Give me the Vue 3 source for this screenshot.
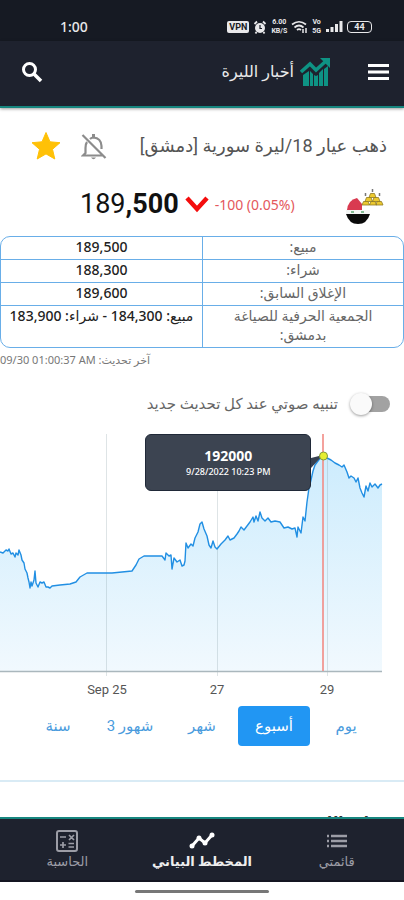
<script setup>
import { ref } from 'vue'

const rows = [
  { label: 'مبيع:', value: '189,500' },
  { label: 'شراء:', value: '188,300' },
  { label: 'الإغلاق السابق:', value: '189,600' },
  { label: 'الجمعية الحرفية للصياغة بدمشق:', value: 'مبيع: 184,300 - شراء: 183,900' },
]
const ranges = ['يوم', 'أسبوع', 'شهر', 'شهور 3', 'سنة']
const active = ref('أسبوع')
const sound = ref(false)

const line =
  'M0 118L3 119L6 116L8 117L9 115L11 120L13 119L15 123L16 119L18 121L19 116L21 121L22 126L24 129L25 135L27 139L28 144L29 148L30 154L31 148L32 152L34 146L35 137L36 149L38 153L40 148L42 149L44 148L46 153L48 153L50 154L52 152L60 151L70 150L76 148L80 143L87 139H112L132 137L136 131L139 125L144 122H162L165 126L166 119L169 122L171 121L172 135L174 124L177 128L180 126L182 132L184 131L185 127L186 109L188 114L191 110L193 112L195 104L198 98L200 90L202 88L204 95L207 102L209 111L211 114L213 107L215 113L217 115L221 110L225 106L228 102L230 106L234 104L237 100L239 97L241 93L244 96L247 92L250 88L253 83L254 88L256 82L258 87L260 78L262 84L265 87L268 84L271 88L275 87L280 88L284 94L288 93L292 95L295 94L297 103L298 93L301 99L303 83L305 87L307 68L309 54L311 46L313 37L315 31L318 27L321 23L323 22L327 24L331 26L335 29L339 31L342 33L344 31L347 38L349 44L351 42L354 44L356 48L358 44L360 54L362 59L364 63L366 52L368 57L370 49L372 53L375 50L378 54L380 51L382 50'
</script>

<template>
  <div class="app">
    <div class="status">
      <span class="clock">1:00</span>
      <div class="indicators">
        <span class="vpn">VPN</span>
        <svg width="14" height="14" viewBox="0 0 14 14"><circle cx="7" cy="8" r="5" fill="#e8e8ea" /><path d="M1.500 4L4 1.500M12.500 4L10 1.500M3.500 12L2.500 13.500M10.500 12L11.500 13.500" stroke="#e8e8ea" stroke-width="1.800" /><path d="M7 5V8.500H9" fill="none" stroke="#171a23" stroke-width="1.200" /></svg>
        <span class="speed"><span>6.00</span><span>KB/S</span></span>
        <svg width="17" height="14" viewBox="0 0 17 14" fill="none" stroke="#e8e8ea" stroke-width="1.700"><path d="M1 4.500Q8 -1 15 4.500M3.500 7.500Q8 3.500 12.500 7.500M6 10Q8 8.300 10 10" /><path d="M12 9V13M15 8V13" stroke-width="1.500" /></svg>
        <span class="speed"><span>Vo</span><span>5G</span></span>
        <svg width="18" height="13" viewBox="0 0 18 13" fill="#e8e8ea"><path d="M1 9h3v3H1zM5.500 7h3v5h-3zM10 4h3v8h-3zM14.500 1h3v11h-3z" /></svg>
        <span class="battery">44</span>
      </div>
    </div>

    <header class="header">
      <button class="icon-btn" aria-label="بحث">
        <svg width="24" height="24" viewBox="0 0 24 24" fill="none" stroke="#fff" stroke-width="3"><circle cx="9.500" cy="9.500" r="6" /><path d="M14 14L21 21" stroke-width="3.500" /></svg>
      </button>
      <div class="brand">
        <span dir="rtl">أخبار الليرة</span>
        <svg width="31" height="30" viewBox="0 0 31 30"><path d="M3 18L9 14V29H3zM10 14L13 17V29H10zM14 18L16 19L18 18V29H14zM19 16L23 12V29H19zM24 12L28 9V29H24z" fill="#0e9384" /><path d="M1 15L10 7L16 13L26 4" fill="none" stroke="#0e9384" stroke-width="3.500" /><path d="M20 1H30V11z" fill="#0e9384" /></svg>
      </div>
      <button class="icon-btn" aria-label="القائمة">
        <svg width="24" height="24" viewBox="0 0 24 24" fill="#fff"><path d="M2 4h21v3H2zM2 10.500h21v3H2zM2 17h21v3H2z" /></svg>
      </button>
    </header>

    <main class="main">
      <div class="title-row">
        <button class="icon-btn" aria-label="المفضلة">
          <svg width="30" height="30" viewBox="0 0 30 30"><path d="M15 1.500L19 10.800L29 11.700L21.500 18.300L23.800 28L15 22.900L6.200 28L8.500 18.300L1 11.700L11 10.800z" fill="#ffc107" stroke="#ffc107" stroke-linejoin="round" /></svg>
        </button>
        <button class="icon-btn" aria-label="إيقاف التنبيه">
          <svg width="26" height="28" viewBox="0 0 26 28" fill="none" stroke="#8c8c8c" stroke-width="2.200"><path d="M6 10Q4.500 12 4.500 16V21L2 23.500H22M9 7Q10.500 5.500 12.500 5.500Q20 6 20.500 14V17M1.500 3L24.500 26" /><path d="M12.500 2V5" stroke-width="3" /><path d="M10 25.500H15Q12.500 29 10 25.500z" fill="#8c8c8c" stroke="none" /></svg>
        </button>
        <h1 dir="rtl">ذهب عيار 18/ليرة سورية [دمشق]</h1>
      </div>

      <div class="price-row">
        <span class="price">189<b>,500</b></span>
        <svg class="arrow" width="26" height="20" viewBox="0 0 26 20"><path d="M3 4L13 15L23 4" fill="none" stroke="#f40d0d" stroke-width="4.500" /></svg>
        <span class="change">-100 (0.05%)</span>
        <svg class="flag" width="41" height="40" viewBox="0 0 41 40">
          <path d="M4 26Q5 16 14 14L19 20V26z" fill="#d93a50" />
          <path d="M3 26H27V30H3z" fill="#f4f6f5" />
          <path d="M8 28h3M18 28h3" stroke="#5ea873" stroke-width="1.500" />
          <path d="M3 30H27Q24 40 15 40Q6 40 3 30z" fill="#0a0a0a" />
          <g fill="#ecc92f" stroke="#907a22" stroke-width=".8">
            <path d="M19 21L20.500 17.500H25L26.500 21zM26.500 21L28 17.500H32L33.500 21zM33 21L34 17.500H38.500L40 21z" />
            <path d="M22 17.500L23.500 13.500H28L29.500 17.500zM29.500 17.500L31 13.500H35.500L37 17.500z" />
            <path d="M26 13.500L27.500 9.500H31.500L33 13.500z" />
          </g>
          <path d="M22.500 9V12M29.500 5V8M36.500 9V12" stroke="#777" stroke-width="1.500" />
        </svg>
      </div>

      <table class="quotes" dir="rtl">
        <tbody>
          <tr v-for="row in rows" :key="row.label">
            <th scope="row">{{ row.label }}</th>
            <td>{{ row.value }}</td>
          </tr>
        </tbody>
      </table>
      <p class="updated"><bdi>09/30 01:00:37 AM</bdi> <bdi>آخر تحديث:</bdi></p>

      <label class="sound" dir="rtl">
        <input v-model="sound" type="checkbox" role="switch" />
        <span>تنبيه صوتي عند كل تحديث جديد</span>
      </label>

      <div class="chart">
        <svg viewBox="0 0 404 242" role="img" aria-label="المخطط البياني">
          <defs>
            <linearGradient id="area" x1="0" y1="0" x2="0" y2="1"><stop offset="0" stop-color="#cdecfd" /><stop offset="1" stop-color="#f1f9fe" /></linearGradient>
          </defs>
          <path :d="line + 'V237H0z'" fill="url(#area)" />
          <path d="M106.500 0V243M217.500 0V243M327.500 22V243" stroke="#7c929c" stroke-opacity=".25" />
          <path :d="line" fill="none" stroke="#218fe3" stroke-width="1.400" stroke-linejoin="round" />
          <path d="M0 237.500H382" stroke="#aab7bd" stroke-width="1.500" />
          <path d="M323 0V237" stroke="#f28b85" stroke-width="1.600" />
          <path d="M311 24L323 21L311 34z" fill="#374151" />
          <circle cx="323.500" cy="22" r="4" fill="#e6ee31" stroke="#829b3d" />
        </svg>
        <div class="tooltip"><strong>192000</strong><span>9/28/2022 10:23 PM</span></div>
        <div class="axis"><span>Sep 25</span><span>27</span><span>29</span></div>
      </div>

      <div class="ranges" dir="rtl">
        <button v-for="r in ranges" :key="r" :class="{ active: r === active }" @click="active = r">{{ r }}</button>
      </div>

      <section class="more" dir="rtl"><h2>قراءة الليرة</h2></section>
    </main>

    <nav class="tabs">
      <a href="#calculator">
        <svg width="24" height="24" viewBox="0 0 24 24" fill="none" stroke="#9c9da6" stroke-width="2"><rect x="2" y="2" width="20" height="20" rx="2" /><path d="M5 8H11M14 6L19 11M19 6L14 11M5 16H11M8 13V19M13.500 14.500H19M13.500 18H19" stroke-width="1.700" /></svg>
        <span>الحاسبة</span>
      </a>
      <a href="#chart" class="current">
        <svg width="26" height="24" viewBox="0 0 26 24"><path d="M3 17L10 9L16 14L23 6" fill="none" stroke="#fff" stroke-width="3" /><g fill="#fff"><circle cx="3" cy="17" r="2.500" /><circle cx="10" cy="9" r="2.500" /><circle cx="16" cy="14" r="2.500" /><circle cx="23" cy="6" r="2.500" /></g></svg>
        <span>المخطط البياني</span>
      </a>
      <a href="#list">
        <svg width="24" height="24" viewBox="0 0 24 24" stroke="#9c9da6" stroke-width="2.400"><path d="M2 7H4M6 7H22M2 12H4M6 12H22M2 17H4M6 17H22" /></svg>
        <span>قائمتي</span>
      </a>
    </nav>
    <div class="home"><i></i></div>
  </div>
</template>

<style>
body { margin: 0; }
</style>

<style scoped>
* { box-sizing: border-box; }
.app { height: 100vh; display: flex; flex-direction: column; overflow: hidden; background: #fff; font-family: Roboto, "DejaVu Sans", sans-serif; color: #555; }
button { font: inherit; border: 0; background: none; padding: 0; cursor: pointer; }
svg { display: block; flex: none; }
.status { height: 41px; flex: none; padding: 12px 32px 0 60px; display: flex; align-items: center; justify-content: space-between; background: #161a23; color: #e8e8ea; }
.clock { font: 500 14px "Noto Sans", sans-serif; }
.indicators { display: flex; align-items: center; gap: 4px; }
.vpn { width: 22px; height: 12px; border-radius: 2px; background: #e8e8ea; color: #161a23; font-size: 9px; font-weight: 700; line-height: 12px; text-align: center; }
.speed { display: grid; font-size: 7px; font-weight: 700; line-height: 9px; text-align: center; }
.battery { width: 25px; height: 12px; border: 1px solid #e8e8ea; border-radius: 4px; font-size: 9px; font-weight: 700; line-height: 10px; text-align: center; }
.header { height: 67px; flex: none; padding: 0 14px 4px 20px; display: flex; align-items: center; background: #1e222e; border-bottom: 2px solid #16867f; box-shadow: 0 1px 3px #0006; z-index: 1; }
.brand { flex: 1; display: flex; align-items: center; justify-content: flex-end; gap: 6px; padding-right: 35px; color: #e9e9ea; font-size: 16px; }
.main { flex: 1; min-height: 0; overflow: hidden; }
.title-row { display: flex; align-items: center; padding: 22px 17px 0 31px; }
.title-row .icon-btn + .icon-btn { margin-left: 20px; }
h1 { flex: 1; margin: 0; font-size: 18px; font-weight: 400; line-height: 32px; color: #555; white-space: nowrap; }
.price-row { display: flex; align-items: center; height: 74px; padding: 10px 20px 0 80px; }
.price { font-size: 27px; line-height: 32px; color: #111; }
.arrow { margin: 0 5px; }
.change { font: 14px "Noto Sans", sans-serif; color: #e4585c; }
.flag { margin-left: auto; }
.quotes { width: 100%; table-layout: fixed; border-collapse: separate; border-spacing: 0; border: 1px solid #69aee8; border-radius: 10px; font: 14px/19px "Noto Sans", "DejaVu Sans", sans-serif; text-align: center; }
.quotes th, .quotes td { padding: 0 2px 3px; vertical-align: top; border-bottom: 1px solid #69aee8; }
.quotes tr:last-child > * { border-bottom: 0; }
.quotes th { padding: 0 18px 3px; font-weight: 400; border-left: 1px solid #69aee8; color: #666; }
.quotes td { color: #222; font-weight: 500; white-space: nowrap; }
.updated { margin: 4px 0 0; font: 11px/16px "Noto Sans", "DejaVu Sans", sans-serif; color: #777; }
.sound { display: flex; align-items: center; gap: 12px; padding: 18px 14px 0; height: 54px; font-size: 15px; color: #666; }
.sound input { appearance: none; position: relative; width: 40px; height: 24px; margin: 0; }
.sound input::before { content: ""; display: block; width: 34px; height: 16px; margin: 4px 0; border-radius: 8px; background: #a2a2a2; }
.sound input::after { content: ""; position: absolute; top: 1px; left: 0; width: 22px; height: 22px; border-radius: 50%; background: #fafafa; box-shadow: 0 1px 3px #0006; }
.sound input:checked::after { left: 18px; }
.chart { position: relative; padding-top: 12px; }
.chart > svg { width: 100%; height: auto; }
.tooltip { position: absolute; top: 12px; left: 36%; width: 41%; height: 57px; display: flex; flex-direction: column; align-items: center; justify-content: center; border: 1px solid #202938; border-radius: 6px; background: #3c4451; color: #fff; font-family: "Noto Sans", sans-serif; }
.tooltip strong { font-size: 14px; line-height: 19px; }
.tooltip span { font-size: 9px; line-height: 14px; font-weight: 500; }
.axis { display: grid; grid-template-columns: 1fr 1fr 1fr; padding: 2px 22px 0 52px; font-size: 13px; line-height: 24px; }
.axis span { text-align: center; }
.ranges { display: flex; align-items: center; padding: 4px 22px 34px; }
.ranges button { flex: 1; height: 40px; border-radius: 4px; color: #4a9bdd; font-size: 15px; white-space: nowrap; }
.ranges .active { background: #2196f3; color: #fff; }
.more { border-top: 2px solid #d9ebf5; padding: 30px 16px 0; }
h2 { margin: 0; font-size: 15px; line-height: 20px; color: #333; }
.tabs { height: 65px; flex: none; display: grid; grid-template-columns: 1fr 1fr 1fr; border-top: 2px solid #16867f; border-bottom: 2px solid #141521; background: #1e222e; }
.tabs a { display: flex; flex-direction: column; align-items: center; padding-top: 10px; color: #9c9da6; font-size: 13px; line-height: 18px; text-decoration: none; }
.tabs .current { color: #eee; font-weight: 700; }
.home { height: 18px; flex: none; display: flex; align-items: center; justify-content: center; background: #fff; }
.home i { width: 33%; height: 3px; border-radius: 2px; background: #777; }
</style>
